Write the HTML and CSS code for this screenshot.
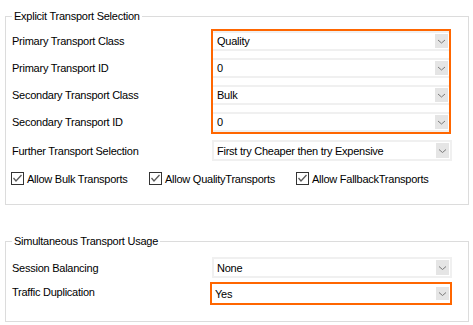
FILE: index.html
```html
<!DOCTYPE html>
<html>
<head>
<meta charset="utf-8">
<link rel="stylesheet" href="styles.css">
</head>
<body>
<div class="group g1">
  <div class="legend">Explicit Transport Selection</div>
  <div class="grid grid1">
    <div class="labels">
      <div class="lbl">Primary Transport Class</div>
      <div class="lbl">Primary Transport ID</div>
      <div class="lbl">Secondary Transport Class</div>
      <div class="lbl">Secondary Transport ID</div>
    </div>
    <div class="hl hl-stack">
      <div class="combo in"><span class="val">Quality</span><span class="btn"><svg width="13" height="14" viewBox="0 0 13 14"><polyline points="3,6 6.5,9 10,6" fill="none" stroke="#7a7a7a" stroke-width="1"/></svg></span></div>
      <div class="combo in"><span class="val">0</span><span class="btn"><svg width="13" height="14" viewBox="0 0 13 14"><polyline points="3,6 6.5,9 10,6" fill="none" stroke="#7a7a7a" stroke-width="1"/></svg></span></div>
      <div class="combo in"><span class="val">Bulk</span><span class="btn"><svg width="13" height="14" viewBox="0 0 13 14"><polyline points="3,6 6.5,9 10,6" fill="none" stroke="#7a7a7a" stroke-width="1"/></svg></span></div>
      <div class="combo in"><span class="val">0</span><span class="btn"><svg width="13" height="14" viewBox="0 0 13 14"><polyline points="3,6 6.5,9 10,6" fill="none" stroke="#7a7a7a" stroke-width="1"/></svg></span></div>
    </div>
    <div class="lbl">Further Transport Selection</div>
    <div class="combo"><span class="val">First try Cheaper then try Expensive</span><span class="btn tall"><svg width="13" height="15" viewBox="0 0 13 15"><polyline points="3,6.5 6.5,9.5 10,6.5" fill="none" stroke="#7a7a7a" stroke-width="1"/></svg></span></div>
  </div>
  <div class="checks">
    <label class="chk"><span class="box"><svg width="11" height="11" viewBox="0 0 11 11"><polyline points="1.5,5 4,8 9.5,2" fill="none" stroke="#5a5a5a" stroke-width="1.3"/></svg></span><span>Allow Bulk Transports</span></label>
    <label class="chk"><span class="box"><svg width="11" height="11" viewBox="0 0 11 11"><polyline points="1.5,5 4,8 9.5,2" fill="none" stroke="#5a5a5a" stroke-width="1.3"/></svg></span><span>Allow QualityTransports</span></label>
    <label class="chk"><span class="box"><svg width="11" height="11" viewBox="0 0 11 11"><polyline points="1.5,5 4,8 9.5,2" fill="none" stroke="#5a5a5a" stroke-width="1.3"/></svg></span><span>Allow FallbackTransports</span></label>
  </div>
</div>

<div class="group g2">
  <div class="legend">Simultaneous Transport Usage</div>
  <div class="grid grid2">
    <div class="lbl">Session Balancing</div>
    <div class="combo"><span class="val">None</span><span class="btn tall"><svg width="13" height="15" viewBox="0 0 13 15"><polyline points="3,6.5 6.5,9.5 10,6.5" fill="none" stroke="#7a7a7a" stroke-width="1"/></svg></span></div>
    <div class="lbl lbl-up">Traffic Duplication</div>
    <div class="hl hl-single">
      <div class="combo bare"><span class="val">Yes</span><span class="btn sq"><svg width="13" height="13" viewBox="0 0 13 13"><polyline points="3,5.5 6.5,8.5 10,5.5" fill="none" stroke="#7a7a7a" stroke-width="1"/></svg></span></div>
    </div>
  </div>
</div>
</body>
</html>
```

FILE: styles.css
```css
html, body {
  margin: 0;
  padding: 0;
  background: #ffffff;
}

body {
  font-family: "Liberation Sans", Arial, sans-serif;
  font-size: 11px;
  letter-spacing: -0.25px;
  color: #000000;
}

.group {
  box-sizing: border-box;
  width: 464px;
  margin-left: 5px;
  border: 1px solid #dcdcdc;
}

.g1 {
  margin-top: 16px;
  padding-bottom: 19px;
}

.g2 {
  margin-top: 36px;
  padding-bottom: 16px;
}

.legend {
  display: block;
  width: max-content;
  height: 13px;
  line-height: 13px;
  margin: -7px 0 0 6px;
  padding: 0 2px;
  background: #ffffff;
}

.grid {
  display: grid;
  grid-template-columns: 200px 240px;
  padding-left: 6px;
  align-items: center;
}

.grid1 {
  margin-top: 6px;
  row-gap: 6px;
}

.grid2 {
  margin-top: 9px;
  row-gap: 4px;
}

.labels {
  display: flex;
  flex-direction: column;
  gap: 7px;
  padding-top: 2px;
  align-self: start;
}

.labels .lbl {
  height: 20px;
  line-height: 20px;
}

.lbl {
  white-space: nowrap;
}

.lbl-up {
  margin-bottom: 3px;
}

.hl {
  box-sizing: border-box;
  border: 2px solid #ff6600;
}

.hl-stack {
  width: 240px;
  margin-left: -1px;
  display: flex;
  flex-direction: column;
  gap: 7px;
}

.hl-single {
  width: 242px;
  height: 23px;
  margin-left: -2px;
}

.combo {
  box-sizing: border-box;
  display: flex;
  align-items: center;
  height: 21px;
  border: 2px solid #f0f0f0;
  padding: 1px 1px 1px 3px;
  background: #ffffff;
  white-space: nowrap;
}

.combo.in {
  height: 20px;
  border-width: 2px 0;
  padding-left: 4px;
}

.combo.bare {
  height: 19px;
  border: 0;
  padding: 1px 1px 1px 3px;
}

.val {
  flex: 1;
  overflow: hidden;
}

.btn {
  display: flex;
  width: 13px;
  height: 14px;
  background: #e5e5e5;
}

.btn.tall {
  height: 15px;
}

.btn.sq {
  height: 13px;
}

.btn svg {
  display: block;
}

.checks {
  display: grid;
  grid-template-columns: 138px 147px auto;
  margin-top: 11px;
  padding-left: 5px;
  height: 13px;
}

.chk {
  display: flex;
  align-items: center;
  gap: 3px;
  white-space: nowrap;
}

.box {
  box-sizing: border-box;
  width: 13px;
  height: 13px;
  border: 1px solid #333333;
  background: #ffffff;
  display: flex;
}
```
